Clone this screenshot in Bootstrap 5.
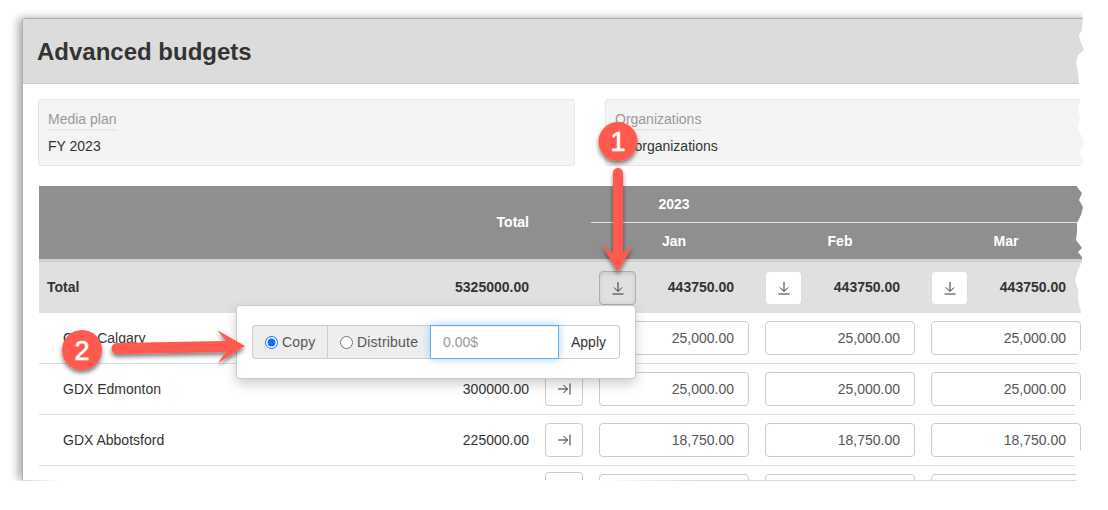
<!DOCTYPE html>
<html lang="en">
<head>
<meta charset="utf-8">
<title>Advanced budgets</title>
<link rel="stylesheet" href="https://cdn.jsdelivr.net/npm/bootstrap@5.3.0/dist/css/bootstrap.min.css">
<style>
html,body{background:#fff;height:510px;overflow:hidden}
body{font-family:"Liberation Sans",Arial,sans-serif;font-size:14px;color:#333;position:relative}
.shot{position:relative;margin:18px 0 0 22px;width:1066px;height:462px;background:#fff;border-left:1px solid #b0b0b0;border-top:1px solid #aaa;border-top-left-radius:4px;box-shadow:-4px 0 8px rgba(0,0,0,.33)}
.shot-clip{overflow:hidden;height:100%;border-top-left-radius:4px}
.shot-head{height:65px;background:#dcdcdc;border-bottom:1px solid #ccc;padding:0 14px}
.shot-head h1{font-size:24px;font-weight:700;margin:0;line-height:66px;color:#333}
.info-row{padding:15px 0 0 15px;gap:30px;width:1100px}
.info-box{flex:0 0 537px;height:67px;background:#f4f4f4;border:1px solid #e6e6e6;border-radius:3px;padding:9px 9px}
.info-label{display:inline-block;color:#999;line-height:20px;border-bottom:2px solid #e8e8e8;padding-bottom:0}
.info-val{margin-top:5px;line-height:20px;color:#333}
.budget-wrap{margin:20px 0 0 16px;width:1060px}
.table.budget{table-layout:fixed;width:1050px;border-collapse:separate;border-spacing:0;margin:0;font-size:14px}
.table.budget>*>*>*{padding:0 8px;vertical-align:middle;border-bottom:0 none;background:transparent;box-shadow:none}
.table.budget thead th{background:#8f8f8f;color:#fff;font-weight:700;text-align:center}
.table.budget thead .h-year{height:37px;border-bottom:1px solid #e4e4e4;padding-left:0;padding-right:332px}
.table.budget thead .h-mon{height:39px;border-bottom:3px solid #cfcfcf;padding-left:0;padding-right:0}
.table.budget thead .h-total{text-align:right;border-bottom:3px solid #cfcfcf}
.table.budget thead .h-blank{border-bottom:3px solid #cfcfcf}
.table.budget .r-total>*{background:#e0e0e0;height:51px;font-weight:700;color:#333}
.table.budget .r-item>*{height:51px;border-bottom:1px solid #ddd;color:#333}
.mon-flex{display:flex;align-items:center;justify-content:space-between;padding-right:15px}
.sq-btn{width:37px;height:34px;padding:0;display:inline-flex;align-items:center;justify-content:center;background:#fff;border:1px solid #ccc;border-radius:4px}
.r-total .sq-btn{border-color:#dcdcdc}
.r-total .sq-on{background:#e0e0e0;border-color:#adadad;box-shadow:inset 0 2px 4px rgba(0,0,0,.1)}
.sq-side{width:38px}
.amt{height:34px;width:150px;border:1px solid #ccc;border-radius:4px;padding:0 14px;line-height:32px;text-align:right;color:#555;font-size:14px;background:#fff}
.amt-pop{position:absolute;left:213px;top:286px;width:400px;height:74px;background:#fff;border:1px solid #ccc;border-radius:4px;box-shadow:0 5px 12px rgba(0,0,0,.2);padding:19px 15px;z-index:5}
.amt-pop .input-group{flex-wrap:nowrap;height:34px}
.seg{background:#eee;border:1px solid #ccc;color:#555;font-size:14px;height:34px;padding:0 0 0 12px;margin:0;display:flex;align-items:center;gap:4px;letter-spacing:.2px}
.seg-a{width:76px;border-radius:4px 0 0 4px;border-right:0}
.seg-b{width:104px;border-right:0}
.seg input{width:13px;height:13px;margin:0;flex:none;accent-color:#0d6efd}
.pop-input{width:129px;flex:none;height:34px;border:1px solid #66afe9;border-radius:0;font-size:14px;padding:0 12px;color:#555;outline:0;box-shadow:inset 0 1px 1px rgba(0,0,0,.075),0 0 8px rgba(102,175,233,.6);position:relative;z-index:2}
.pop-input::placeholder{color:#999}
.pop-btn{width:62px;height:34px;background:#fff;border:1px solid #ccc;border-left:0;border-radius:0 4px 4px 0;color:#333;font-size:14px;padding:0}
.torn,.marks{position:absolute;left:0;top:0;pointer-events:none}
.torn{z-index:10}
.marks{z-index:20}
.mark-num{font-family:"Liberation Sans",Arial,sans-serif;font-size:27px;font-weight:400;fill:#fff;stroke:#fff;stroke-width:.6px;text-anchor:middle}
</style>
</head>
<body>
<div class="shot">
  <div class="shot-clip">
    <div class="shot-head"><h1>Advanced budgets</h1></div>
    <div class="d-flex info-row">
      <div class="info-box"><span class="info-label">Media plan</span><div class="info-val">FY 2023</div></div>
      <div class="info-box"><span class="info-label">Organizations</span><div class="info-val">All organizations</div></div>
    </div>
    <div class="budget-wrap">
      <table class="table budget">
        <colgroup><col style="width:498px"><col style="width:54px"><col style="width:166px"><col style="width:166px"><col style="width:166px"></colgroup>
        <thead>
          <tr><th class="h-total" rowspan="2">Total</th><th class="h-blank" rowspan="2"></th><th class="h-year" colspan="3">2023</th></tr>
          <tr><th class="h-mon">Jan</th><th class="h-mon">Feb</th><th class="h-mon">Mar</th></tr>
        </thead>
        <tbody>
          <tr class="r-total"><td><div class="d-flex justify-content-between"><span>Total</span><span>5325000.00</span></div></td><td></td>
            <td><div class="mon-flex"><button class="sq-btn sq-on" aria-label="Copy to all"><svg width="14" height="14" viewBox="0 0 14 14" fill="none" stroke="#333" stroke-width="1"><path d="M7 1v9M3 6.5 7 10.5l4-4M1.5 13h11"/></svg></button><span>443750.00</span></div></td>
            <td><div class="mon-flex"><button class="sq-btn" aria-label="Copy to all"><svg width="14" height="14" viewBox="0 0 14 14" fill="none" stroke="#333" stroke-width="1"><path d="M7 1v9M3 6.5 7 10.5l4-4M1.5 13h11"/></svg></button><span>443750.00</span></div></td>
            <td><div class="mon-flex"><button class="sq-btn" aria-label="Copy to all"><svg width="14" height="14" viewBox="0 0 14 14" fill="none" stroke="#333" stroke-width="1"><path d="M7 1v9M3 6.5 7 10.5l4-4M1.5 13h11"/></svg></button><span>443750.00</span></div></td>
          </tr>
          <tr class="r-item"><td><div class="d-flex justify-content-between ps-3"><span>GDX Calgary</span><span>300000.00</span></div></td><td><button class="sq-btn sq-side" aria-label="Fill row"><svg width="14" height="14" viewBox="0 0 14 14" fill="none" stroke="#333"><path d="M1 7h9.5M6.5 3l4 4-4 4M13 1.5v11"/></svg></button></td><td><div class="amt">25,000.00</div></td><td><div class="amt">25,000.00</div></td><td><div class="amt">25,000.00</div></td></tr>
          <tr class="r-item"><td><div class="d-flex justify-content-between ps-3"><span>GDX Edmonton</span><span>300000.00</span></div></td><td><button class="sq-btn sq-side" aria-label="Fill row"><svg width="14" height="14" viewBox="0 0 14 14" fill="none" stroke="#333"><path d="M1 7h9.5M6.5 3l4 4-4 4M13 1.5v11"/></svg></button></td><td><div class="amt">25,000.00</div></td><td><div class="amt">25,000.00</div></td><td><div class="amt">25,000.00</div></td></tr>
          <tr class="r-item"><td><div class="d-flex justify-content-between ps-3"><span>GDX Abbotsford</span><span>225000.00</span></div></td><td><button class="sq-btn sq-side" aria-label="Fill row"><svg width="14" height="14" viewBox="0 0 14 14" fill="none" stroke="#333"><path d="M1 7h9.5M6.5 3l4 4-4 4M13 1.5v11"/></svg></button></td><td><div class="amt">18,750.00</div></td><td><div class="amt">18,750.00</div></td><td><div class="amt">18,750.00</div></td></tr>
          <tr class="r-item"><td></td><td><button class="sq-btn sq-side" aria-label="Fill row"></button></td><td><div class="amt"></div></td><td><div class="amt"></div></td><td><div class="amt"></div></td></tr>
        </tbody>
      </table>
    </div>
  </div>
  <div class="amt-pop">
    <div class="input-group">
      <label class="seg seg-a"><input type="radio" name="m" checked> Copy</label>
      <label class="seg seg-b"><input type="radio" name="m"> Distribute</label>
      <input class="pop-input" type="text" placeholder="0.00$" aria-label="Amount">
      <button class="pop-btn" type="button">Apply</button>
    </div>
  </div>
</div>
<svg class="torn" width="1108" height="510" viewBox="0 0 1108 510"><path fill="#fff" d="M1108 0V510H0V481H24L60 480H600L700 481H1076V470L1074 455L1081 450V423L1075 420V404L1081 400V372L1077 370V363L1078 358V354L1081 350V313L1081 312L1078 300V290L1075 280L1078 270L1082 262V257L1078 252L1082 248L1076 240L1077 232V223L1081 215L1083 207L1079 200L1082 193L1077 187L1081 165L1083 160L1080 153L1084 143L1082 137L1078 128L1080 118L1078 110L1080 100L1079 83L1078 72L1076 63L1078 55L1084 50L1081 43L1079 35L1082 30L1083 15V0Z"/></svg>
<svg class="marks" width="1108" height="510" viewBox="0 0 1108 510">
  <defs><filter id="sh" x="-30%" y="-30%" width="160%" height="160%"><feDropShadow dx="0" dy="3" stdDeviation="2" flood-color="#000" flood-opacity=".5"/></filter></defs>
  <g filter="url(#sh)" fill="#ff5a4d">
    <path d="M613 173a5 5 0 0 1 10 0V253L633 245L618 272L602 245L613 253Z"/>
    <path d="M117 343L226 341L217 330L245 346L218 363L226 352L117 354a5.5 5.5 0 0 1 0-11Z"/>
    <circle cx="618" cy="141.500" r="19.500"/>
    <circle cx="82" cy="350" r="20"/>
  </g>
  <text class="mark-num" x="618" y="151">1</text>
  <text class="mark-num" x="82" y="360">2</text>
</svg>
<script src="https://cdn.jsdelivr.net/npm/bootstrap@5.3.0/dist/js/bootstrap.bundle.min.js"></script>
</body>
</html>
